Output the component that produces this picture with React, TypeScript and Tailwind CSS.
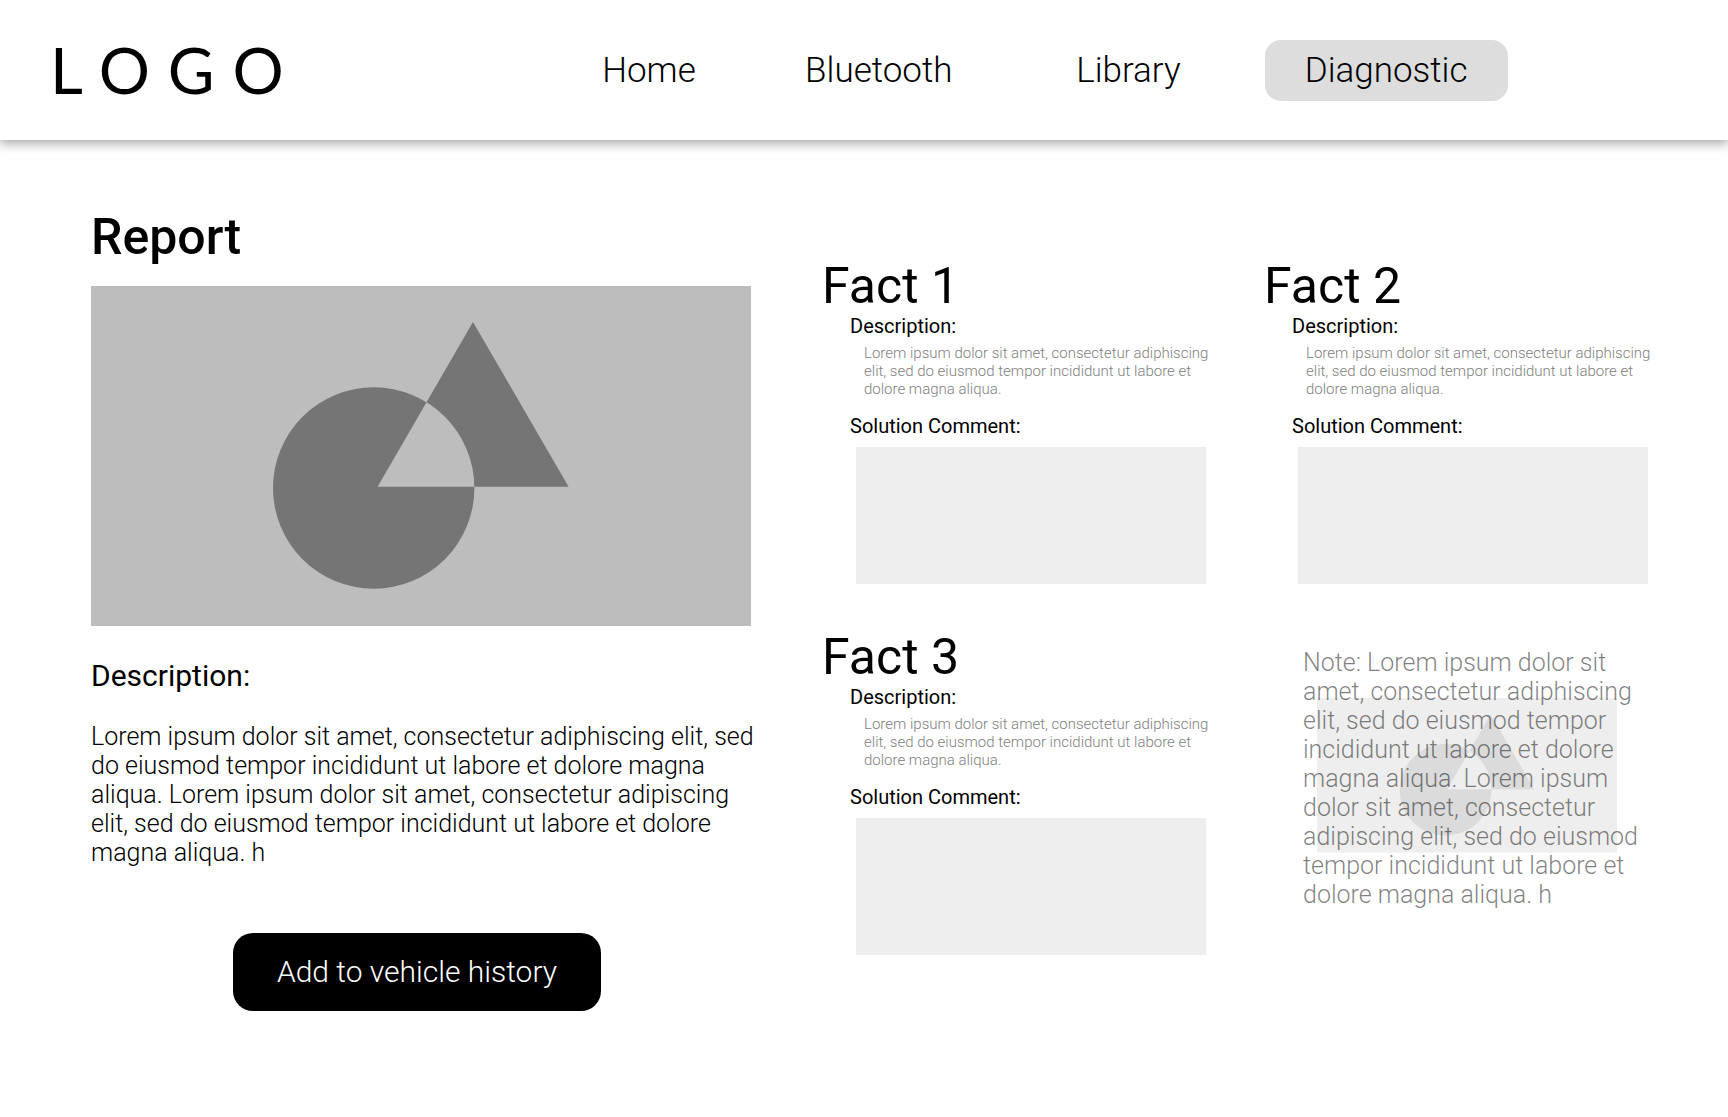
import React, { useId } from "react";

const navItems = [
  { label: "Home", active: false },
  { label: "Bluetooth", active: false },
  { label: "Library", active: false },
  { label: "Diagnostic", active: true },
];

const facts = ["Fact 1", "Fact 2", "Fact 3"];

function PlaceholderImage({ className }: { className: string }) {
  return (
    <svg viewBox="0 0 660 340" className={className} role="img" aria-label="Placeholder">
      <rect width="660" height="340" fill="#bdbdbd" />
      <path
        fill="#757575"
        fillRule="evenodd"
        d="M182 202a100.7 100.7 0 1 0 201.4 0a100.7 100.7 0 1 0 -201.4 0ZM382 36L477.6 200.7H286.6Z"
      />
    </svg>
  );
}

function Header() {
  return (
    <header className="flex h-[140px] items-center bg-white pl-[50px] pr-[212px] shadow-[0_4px_10px_rgba(0,0,0,0.33)]">
      <a href="#" className="font-[Lato] text-[64px] leading-[72px] tracking-[0.28em]">
        LOGO
      </a>
      <nav className="ml-auto w-[66.5%] max-w-[976px]">
        <ul className="grid grid-cols-[216fr_244fr_256fr_260fr] justify-items-center text-[35px] font-light leading-[61px]">
          {navItems.map((item) => (
            <li key={item.label}>
              <a
                href="#"
                aria-current={item.active ? "page" : undefined}
                className={
                  item.active
                    ? "block rounded-2xl bg-[#dddddd] px-10"
                    : "block rounded-2xl px-10"
                }
              >
                {item.label}
              </a>
            </li>
          ))}
        </ul>
      </nav>
    </header>
  );
}

function Report() {
  return (
    <section className="flex flex-col">
      <h1 className="text-[50px] font-medium leading-[60px]">Report</h1>
      <PlaceholderImage className="mt-[19px] w-full pr-1" />
      <h2 className="mt-8 text-[30px] leading-[36px]">Description:</h2>
      <p className="mt-7 text-[25px] font-light leading-[29px]">
        Lorem ipsum dolor sit amet, consectetur adiphiscing elit, sed do eiusmod tempor incididunt
        ut labore et dolore magna aliqua. Lorem ipsum dolor sit amet, consectetur adipiscing elit,
        sed do eiusmod tempor incididunt ut labore et dolore magna aliqua. h
      </p>
      <button
        type="button"
        className="mr-3 mt-[66px] self-center rounded-[20px] bg-black px-11 text-[30px] font-light leading-[78px] text-white"
      >
        Add to vehicle history
      </button>
    </section>
  );
}

function Fact({ title }: { title: string }) {
  const commentId = useId();
  return (
    <article className="pb-11">
      <h2 className="text-[50px] leading-[58px]">{title}</h2>
      <h3 className="ml-7 text-[20px] leading-[23px]">Description:</h3>
      <p className="-mr-2 ml-[42px] mt-[6px] text-[15px] font-light leading-[18px] text-[#808080]">
        Lorem ipsum dolor sit amet, consectetur adiphiscing elit, sed do eiusmod tempor incididunt
        ut labore et dolore magna aliqua.
      </p>
      <label htmlFor={commentId} className="ml-7 mt-[17px] block text-[20px] leading-[23px]">
        Solution Comment:
      </label>
      <div className="ml-[34px] mt-[9px] flex">
        <textarea id={commentId} className="h-[137px] w-full resize-none bg-[#eeeeee] p-3" />
      </div>
    </article>
  );
}

function Note() {
  return (
    <aside className="relative ml-[39px] mt-[20px]">
      <PlaceholderImage className="absolute left-[14px] top-[50px] w-[300px] opacity-25" />
      <p className="relative text-[25px] font-light leading-[29px] text-black/50">
        Note: Lorem ipsum dolor sit amet, consectetur adiphiscing elit, sed do eiusmod tempor
        incididunt ut labore et dolore magna aliqua. Lorem ipsum dolor sit amet, consectetur
        adipiscing elit, sed do eiusmod tempor incididunt ut labore et dolore magna aliqua. h
      </p>
    </aside>
  );
}

export default function App() {
  return (
    <div className="min-h-screen bg-white font-[Roboto,sans-serif] text-black">
      <Header />
      <main className="grid grid-cols-[664fr_826fr] gap-x-[67px] pb-20 pl-[91px] pr-20 pt-[67px]">
        <Report />
        <div className="grid grid-cols-2 content-start gap-x-[58px] pt-[50px]">
          {facts.map((title) => (
            <Fact key={title} title={title} />
          ))}
          <Note />
        </div>
      </main>
    </div>
  );
}
